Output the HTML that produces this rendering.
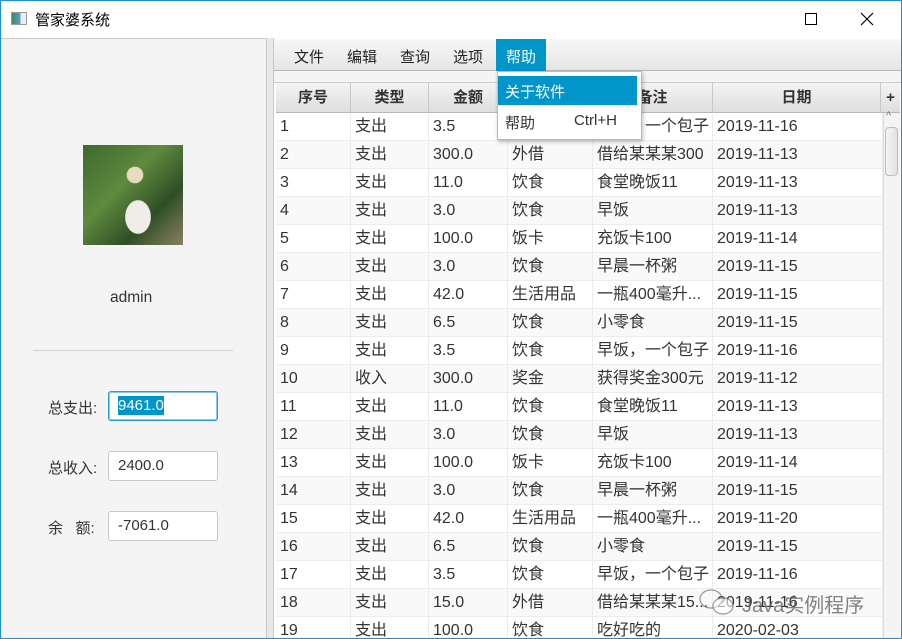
<!DOCTYPE html>
<html><head><meta charset="utf-8"><style>
*{margin:0;padding:0;box-sizing:border-box}
html,body{width:902px;height:639px;overflow:hidden}
body{position:relative;background:#fff;font-family:"Liberation Sans","Noto Sans CJK SC",sans-serif;color:#333}
.a{position:absolute}
.win{left:0;top:0;width:902px;height:639px;border:1px solid #1e8fd6}
.t{font-size:15px;white-space:nowrap}
.row{position:absolute;left:0;width:607px;height:28px;border-bottom:1px solid #ececec}
.row div{position:absolute;top:0;height:28px;line-height:28px;font-size:16px;color:#333;padding-left:4px;border-right:1px solid #ececec;white-space:nowrap;overflow:hidden}
.hd{position:absolute;top:83px;height:30px;line-height:30px;font-size:15px;font-weight:bold;text-align:center;background:linear-gradient(#f4f4f4,#dedede);border-right:1px solid #c8c8c8;border-bottom:1px solid #b8b8b8;color:#333}
.fld{position:absolute;left:108px;width:110px;height:30px;border:1px solid #c9c9c9;border-radius:3px;background:#fff;font-size:15px;line-height:28px;padding-left:9px}
</style></head><body>
<div class="a" style="left:0;top:0;width:902px;height:38px;background:#fff"></div>
<div class="a" style="left:11px;top:12px;width:16px;height:13px;border:1px solid #999;background:linear-gradient(90deg,#3a8a6a,#5aa0c0 60%,#eee 60%)"></div>
<div class="a t" style="left:35px;top:9px;font-size:15px;color:#000">管家婆系统</div>
<div class="a" style="left:805px;top:13px;width:12px;height:12px;border:1px solid #000"></div>
<svg class="a" style="left:860px;top:12px" width="14" height="14"><path d="M1 1L13 13M13 1L1 13" stroke="#000" stroke-width="1.2"/></svg>
<div class="a" style="left:1px;top:38px;width:265px;height:600px;background:#f4f4f4;border-top:1px solid #ccc"></div>
<div class="a" style="left:266px;top:38px;width:8px;height:600px;background:#e8e8e8;border-left:1px solid #c8c8c8;border-right:1px solid #c8c8c8"></div>
<div class="a" style="left:83px;top:145px;width:100px;height:100px;background:radial-gradient(ellipse at 55% 72%,#f0ece8 0 16%,transparent 17%),radial-gradient(circle at 52% 30%,#e8dcc0 0 9%,transparent 10%),linear-gradient(135deg,#3d6a2e,#5f8a3e 40%,#2e4f26 70%,#8a8060)"></div>
<div class="a t" style="left:110px;top:289px;font-size:15.5px">admin</div>
<div class="a" style="left:33px;top:350px;width:200px;height:1px;background:#d0d0d0"></div>
<div class="a t" style="left:48px;top:397px">总支出:</div>
<div class="fld" style="top:391px;border:1px solid #2b9ad6;box-shadow:0 0 0 1px #8cc8ee inset"><span style="background:#0096c9;color:#fff;padding:1px 0">9461.0</span></div>
<div class="a t" style="left:48px;top:457px">总收入:</div>
<div class="fld" style="top:451px">2400.0</div>
<div class="a t" style="left:48px;top:517px">余&nbsp;&nbsp;&nbsp;额:</div>
<div class="fld" style="top:511px">-7061.0</div>
<div class="a" style="left:274px;top:39px;width:627px;height:32px;background:linear-gradient(#f7f7f7,#e6e6e6);border-bottom:1px solid #b8b8b8"></div>
<div class="a" style="left:274px;top:71px;width:627px;height:12px;background:#f4f4f4;border-bottom:1px solid #ccc"></div>
<div class="a t" style="left:294px;top:46px;color:#222">文件</div>
<div class="a t" style="left:347px;top:46px;color:#222">编辑</div>
<div class="a t" style="left:400px;top:46px;color:#222">查询</div>
<div class="a t" style="left:453px;top:46px;color:#222">选项</div>
<div class="a" style="left:496px;top:39px;width:50px;height:32px;background:#0096c9"></div>
<div class="a t" style="left:506px;top:46px;color:#fff">帮助</div>
<div class="a" style="left:276px;top:113px;width:607px;height:525px;background:#fff;overflow:hidden"><div id="rows"></div></div>
<div class="hd" style="left:276px;width:75px">序号</div>
<div class="hd" style="left:351px;width:78px">类型</div>
<div class="hd" style="left:429px;width:79px">金额</div>
<div class="hd" style="left:508px;width:85px">分类</div>
<div class="hd" style="left:593px;width:120px">备注</div>
<div class="hd" style="left:713px;width:168px">日期</div>
<div class="hd" style="left:881px;width:19px;border-right:none">+</div>
<div class="a" style="left:883px;top:113px;width:17px;height:525px;background:#f4f4f4;border-left:1px solid #ddd"></div>
<div class="a t" style="left:886px;top:110px;font-size:11px;color:#777">^</div>
<div class="a" style="left:885px;top:127px;width:13px;height:49px;border:1px solid #bbb;border-radius:4px;background:linear-gradient(90deg,#f4f4f4,#e2e2e2)"></div>
<div class="a" style="left:497px;top:71px;width:145px;height:69px;background:#fff;border:1px solid #bbb;box-shadow:1px 2px 4px rgba(0,0,0,.25)"></div>
<div class="a" style="left:498px;top:76px;width:139px;height:29px;background:#0096c9"></div>
<div class="a t" style="left:505px;top:81px;color:#fff">关于软件</div>
<div class="a t" style="left:505px;top:112px;color:#333">帮助</div>
<div class="a t" style="left:574px;top:112px;color:#333">Ctrl+H</div>
<div class="a t" style="left:742px;top:589px;font-size:20px;color:rgba(90,90,90,.75)">Java实例程序</div>
<svg class="a" style="left:697px;top:587px" width="40" height="30"><ellipse cx="14" cy="12" rx="11" ry="9" fill="none" stroke="rgba(110,110,110,.7)" stroke-width="1.2"/><ellipse cx="26" cy="19" rx="10" ry="8" fill="rgba(255,255,255,.6)" stroke="rgba(110,110,110,.7)" stroke-width="1.2"/></svg>
<div class="win a"></div>
<script>
var d=[["1","支出","3.5","饮食","早饭，一个包子","2019-11-16"],["2","支出","300.0","外借","借给某某某300","2019-11-13"],["3","支出","11.0","饮食","食堂晚饭11","2019-11-13"],["4","支出","3.0","饮食","早饭","2019-11-13"],["5","支出","100.0","饭卡","充饭卡100","2019-11-14"],["6","支出","3.0","饮食","早晨一杯粥","2019-11-15"],["7","支出","42.0","生活用品","一瓶400毫升...","2019-11-15"],["8","支出","6.5","饮食","小零食","2019-11-15"],["9","支出","3.5","饮食","早饭，一个包子","2019-11-16"],["10","收入","300.0","奖金","获得奖金300元","2019-11-12"],["11","支出","11.0","饮食","食堂晚饭11","2019-11-13"],["12","支出","3.0","饮食","早饭","2019-11-13"],["13","支出","100.0","饭卡","充饭卡100","2019-11-14"],["14","支出","3.0","饮食","早晨一杯粥","2019-11-15"],["15","支出","42.0","生活用品","一瓶400毫升...","2019-11-20"],["16","支出","6.5","饮食","小零食","2019-11-15"],["17","支出","3.5","饮食","早饭，一个包子","2019-11-16"],["18","支出","15.0","外借","借给某某某15...","2019-11-16"],["19","支出","100.0","饮食","吃好吃的","2020-02-03"]];
var L=[0,75,153,232,317,437],W=[75,78,79,85,120,170],h="";
d.forEach(function(r,i){h+='<div class="row" style="top:'+(28*i)+'px;background:'+(i%2?'#f9f9f9':'#fff')+'">';r.forEach(function(c,j){h+='<div style="left:'+L[j]+'px;width:'+W[j]+'px">'+c+'</div>'});h+='</div>'});
document.getElementById('rows').innerHTML=h;
</script>
</body></html>
